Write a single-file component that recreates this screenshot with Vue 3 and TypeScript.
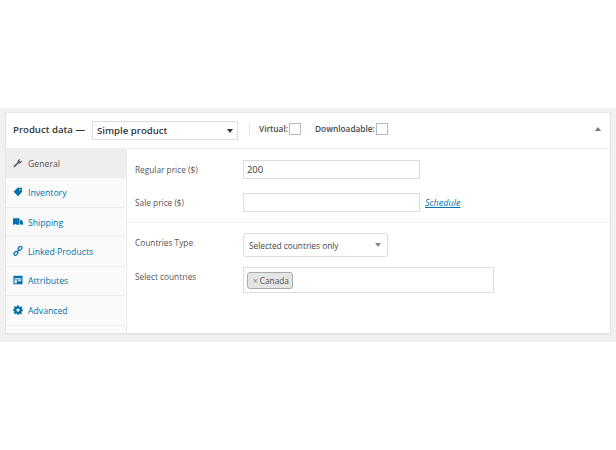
<script setup lang="ts">
const tabs = [
  { label: 'General', icon: 'wrench' },
  { label: 'Inventory', icon: 'tag' },
  { label: 'Shipping', icon: 'truck' },
  { label: 'Linked Products', icon: 'link' },
  { label: 'Attributes', icon: 'table' },
  { label: 'Advanced', icon: 'gear' },
]
</script>

<template>
  <div class="page">
    <section class="band">
      <div class="box">
        <header class="head">
          <span class="title">Product data —</span>
          <div class="type-select">
            <span>Simple product</span>
            <i class="caret dark"></i>
          </div>
          <span class="sep"></span>
          <label class="check first">Virtual:<i class="tick"></i></label>
          <label class="check">Downloadable:<i class="tick"></i></label>
          <i class="collapse"></i>
        </header>
        <div class="body">
          <nav class="tabs">
            <a v-for="(t, i) in tabs" :key="t.label" class="tab" :class="{ active: i === 0 }">
              <svg class="ico" viewBox="0 0 12 12" aria-hidden="true">
                <path v-if="t.icon === 'wrench'" d="M1 11 L0.6 10 L5.6 5.2 C5 3.4 6.4 1.2 9 1.4 L7.4 3.2 L8.8 4.6 L10.8 3 C11 5.4 8.8 7 6.8 6.4 L2 11.2 Z" />
                <path v-else-if="t.icon === 'tag'" d="M5.5 0.8 H10.8 V6 L6 11 L0.8 5.8 Z M8.4 2.4 A0.9 0.9 0 1 0 8.4 4.2 A0.9 0.9 0 1 0 8.4 2.4 Z" fill-rule="evenodd" />
                <path v-else-if="t.icon === 'truck'" d="M0 1.6 H7.8 V9.4 H4.4 A1.5 1.5 0 0 0 1.6 9.4 H0 Z M8.4 3.6 H10.2 L12 6 V9.4 H10.8 A1.5 1.5 0 0 0 8.4 9.4 Z" />
                <g v-else-if="t.icon === 'link'" fill="none" stroke="currentColor" stroke-width="1.5">
                  <rect x="6" y="1" width="5" height="3.6" rx="1.7" transform="rotate(-45 8.5 2.8)" />
                  <rect x="1" y="7" width="5" height="3.6" rx="1.7" transform="rotate(-45 3.5 8.8)" />
                  <path d="M4.5 7.5 L7.5 4.5" />
                </g>
                <path v-else-if="t.icon === 'table'" d="M0.5 1 H11.5 V11 H0.5 Z M1.8 4 V5.4 H10.2 V4 Z M1.8 6.4 V9.8 H4.6 V6.4 Z M5.6 6.4 V7.6 H10.2 V6.4 Z" fill-rule="evenodd" />
                <path v-else d="M5 0.5 H7 L7.3 2 L8.6 2.5 L9.9 1.6 L11.3 3 L10.4 4.3 L10.9 5.5 L11.8 5.8 V7.2 L10.5 7.6 L10 8.8 L10.9 10 L9.6 11.3 L8.4 10.4 L7.2 10.9 L7 11.8 H5 L4.7 10.6 L3.5 10.1 L2.2 11 L0.9 9.6 L1.8 8.4 L1.3 7.2 L0.2 7 V5.2 L1.4 4.9 L1.9 3.7 L1.1 2.5 L2.4 1.2 L3.6 2.1 L4.7 1.6 Z M6 4.2 A1.9 1.9 0 1 0 6 8 A1.9 1.9 0 1 0 6 4.2 Z" fill-rule="evenodd" />
              </svg>
              <span>{{ t.label }}</span>
            </a>
          </nav>
          <main class="panel">
            <div class="group prices">
              <div class="row">
                <span class="lbl">Regular price ($)</span>
                <div class="input">200</div>
              </div>
              <div class="row">
                <span class="lbl">Sale price ($)</span>
                <div class="input"></div>
                <a class="schedule">Schedule</a>
              </div>
            </div>
            <div class="group countries">
              <div class="row top">
                <span class="lbl">Countries Type</span>
                <div class="select">
                  <span>Selected countries only</span>
                  <i class="caret"></i>
                </div>
              </div>
              <div class="row top">
                <span class="lbl">Select countries</span>
                <div class="multi">
                  <span class="chip"><b>×</b> Canada</span>
                </div>
              </div>
            </div>
          </main>
        </div>
      </div>
    </section>
  </div>
</template>

<style>
html, body { margin: 0; background: #fff; }
</style>

<style scoped>
.page {
  width: 616px;
  height: 450px;
  padding-top: 108px;
  box-sizing: border-box;
  font-family: "Open Sans", "Noto Sans", sans-serif;
  font-size: 8.3px;
  color: #555;
}
.band {
  height: 234px;
  background: #f1f1f1;
  padding: 4px 5px 0 5px;
  box-sizing: border-box;
}
.box {
  height: 220px;
  background: #fff;
  border: 1px solid #e5e5e5;
  box-shadow: 0 1px 1px rgba(0, 0, 0, 0.04);
  display: flex;
  flex-direction: column;
}
.head {
  height: 35px;
  flex: none;
  border-bottom: 1px solid #eee;
  display: flex;
  align-items: center;
  padding-left: 7px;
  padding-right: 9px;
}
.title {
  font-size: 9.6px;
  font-weight: 600;
  color: #32373c;
  width: 79px;
  flex: none;
  position: relative;
  top: -1px;
}
.type-select {
  width: 146px;
  height: 19px;
  border: 1px solid #ddd;
  box-sizing: border-box;
  display: flex;
  align-items: center;
  justify-content: space-between;
  padding: 0 4px 0 4px;
  font-size: 9.6px;
  font-weight: 600;
  color: #32373c;
  flex: none;
}
.caret {
  width: 0;
  height: 0;
  border-left: 3px solid transparent;
  border-right: 3px solid transparent;
  border-top: 4px solid #888;
  margin-right: 2px;
}
.caret.dark { border-top-color: #32373c; margin-right: 0; }
.sep {
  width: 1px;
  height: 12px;
  background: #e5e5e5;
  margin-left: 11px;
  position: relative;
  top: -2px;
}
.check {
  display: flex;
  align-items: center;
  font-size: 8.3px;
  font-weight: 600;
  color: #464b50;
  margin-left: 14px;
  position: relative;
  top: -2px;
}
.check.first { margin-left: 9px; }
.tick {
  display: block;
  width: 10px;
  height: 10px;
  border: 1px solid #b4b9be;
  margin-left: 1px;
  background: #fff;
  box-sizing: content-box;
}
.collapse {
  margin-left: auto;
  width: 0;
  height: 0;
  border-left: 3px solid transparent;
  border-right: 3px solid transparent;
  border-bottom: 4px solid #777;
  position: relative;
  top: -2px;
}
.body {
  flex: 1;
  display: flex;
  min-height: 0;
}
.tabs {
  width: 120px;
  flex: none;
  background: #fafafa;
  border-right: 1px solid #eee;
  display: flex;
  flex-direction: column;
}
.tab {
  height: 29.45px;
  box-sizing: border-box;
  border-bottom: 1px solid #eee;
  display: flex;
  align-items: center;
  color: #0073aa;
  padding-left: 7px;
  padding-top: 1px;
  gap: 5px;
  font-size: 8.7px;
}
.tab.active {
  background: #eee;
  color: #555;
}
.ico {
  width: 10px;
  height: 10px;
  fill: currentColor;
  flex: none;
  position: relative;
  top: -1px;
}
.panel {
  flex: 1;
  min-width: 0;
}
.group.prices {
  height: 74px;
  padding-top: 11px;
  box-sizing: border-box;
  border-bottom: 1px solid #eee;
}
.group.countries {
  padding-top: 10px;
}
.row {
  display: flex;
  align-items: center;
  padding-left: 8px;
  margin-bottom: 14px;
}
.row.top { align-items: flex-start; margin-bottom: 10px; }
.lbl {
  width: 108px;
  flex: none;
}
.row.top .lbl { padding-top: 4px; }
.input {
  width: 177px;
  height: 19px;
  border: 1px solid #ddd;
  box-sizing: border-box;
  font-size: 9.4px;
  color: #32373c;
  padding-left: 3px;
  line-height: 17px;
  box-shadow: inset 0 1px 2px rgba(0, 0, 0, 0.03);
}
.schedule {
  margin-left: 5px;
  color: #0073aa;
  font-style: italic;
  font-size: 9px;
  text-decoration: underline;
}
.select {
  width: 145px;
  height: 24px;
  border: 1px solid #ddd;
  border-radius: 3px;
  box-sizing: border-box;
  display: flex;
  align-items: center;
  justify-content: space-between;
  padding: 0 4px 0 5px;
  color: #444;
  font-size: 8.3px;
}
.multi {
  width: 251px;
  height: 26px;
  border: 1px solid #ddd;
  box-sizing: border-box;
  padding: 4px 3px;
}
.chip {
  display: inline-flex;
  align-items: center;
  gap: 2px;
  height: 17px;
  padding: 0 3px 0 5px;
  box-sizing: border-box;
  background: #e4e4e4;
  border: 1px solid #aaa;
  border-radius: 3px;
  color: #555;
  font-size: 8.3px;
}
.chip b { font-weight: 400; color: #888; }
</style>
